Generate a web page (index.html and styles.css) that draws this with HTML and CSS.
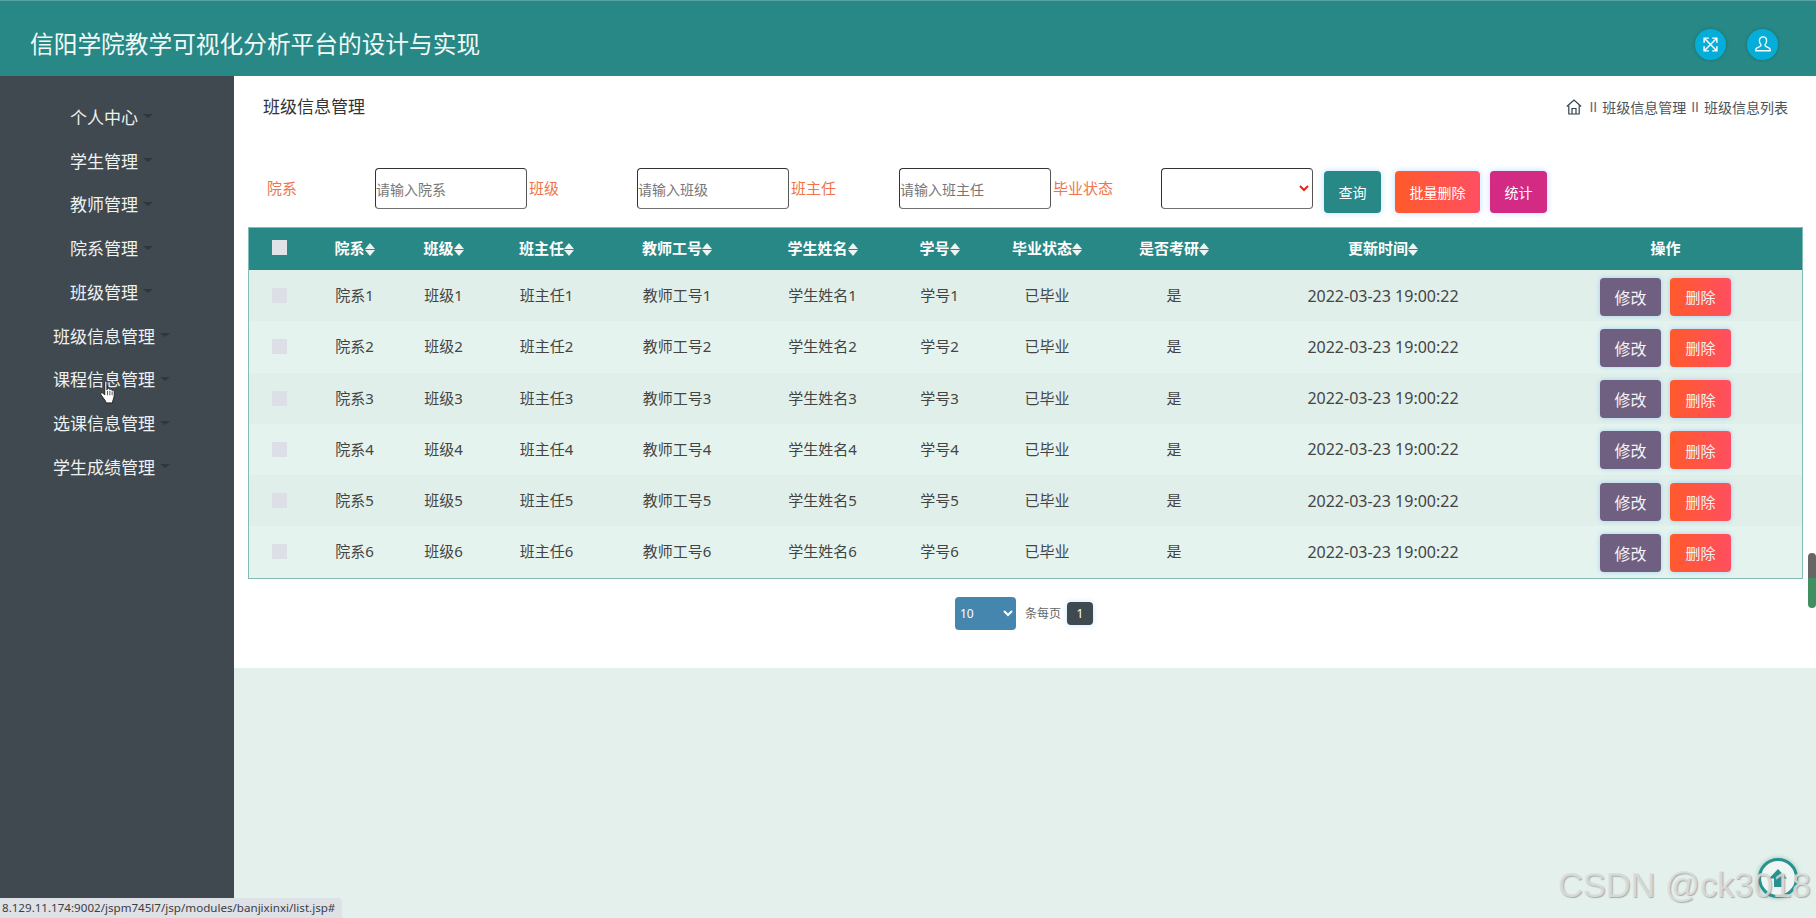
FILE: index.html
```html
<!DOCTYPE html>
<html lang="zh">
<head>
<meta charset="utf-8">
<title>班级信息管理</title>
<link rel="stylesheet" href="styles.css">
</head>
<body>
<div class="page">
  <header class="topbar">
    <h1 class="app-title">信阳学院教学可视化分析平台的设计与实现</h1>
    <div class="top-actions">
      <span class="round-btn">
        <svg viewBox="0 0 20 20" width="17" height="17" fill="none" stroke="#fff" stroke-width="1.6"><path d="M3 3 17 17M17 3 3 17"/><path d="M2.5 8V2.5H8M12 2.5h5.5V8M17.5 12v5.5H12M8 17.5H2.5V12" stroke-width="1.7"/></svg>
      </span>
      <span class="round-btn">
        <svg viewBox="0 0 20 20" width="18" height="18" fill="none" stroke="#fff" stroke-width="1.5"><path d="M10 2c-2.6 0-4 2-4 4.4 0 1.8.7 3.300 1.700 4.300.3.900-.2 1.600-1.200 2.100L3 14.500c-1 .6-1.200 1.500-1 3h16c.2-1.500 0-2.400-1-3l-3.500-1.700c-1-.5-1.500-1.200-1.200-2.100 1-1 1.700-2.500 1.700-4.300C14 4 12.600 2 10 2Z"/></svg>
      </span>
    </div>
  </header>

  <div class="layout">
    <nav class="sidebar">
      <a class="nav-item">个人中心<i class="caret"></i></a>
      <a class="nav-item">学生管理<i class="caret"></i></a>
      <a class="nav-item">教师管理<i class="caret"></i></a>
      <a class="nav-item">院系管理<i class="caret"></i></a>
      <a class="nav-item">班级管理<i class="caret"></i></a>
      <a class="nav-item">班级信息管理<i class="caret"></i></a>
      <a class="nav-item">课程信息管理<i class="caret"></i></a>
      <a class="nav-item">选课信息管理<i class="caret"></i></a>
      <a class="nav-item">学生成绩管理<i class="caret"></i></a>
    </nav>

    <main class="main">
      <section class="card">
        <div class="title-row">
          <h2 class="page-title">班级信息管理</h2>
          <div class="crumbs">
            <svg class="home" viewBox="0 0 16 16" width="16" height="16" fill="none" stroke="#33404a" stroke-width="1.2"><path d="M.8 7.500 8 1l7.200 6.500"/><path d="M2.800 6.500V15h10.400V6.500"/><path d="M6 15V9.500h4V15"/></svg>
            <span class="sep">II</span><span>班级信息管理</span><span class="sep">II</span><span>班级信息列表</span>
          </div>
        </div>

        <form class="search">
          <label class="field-label">院系</label>
          <input class="field-input" placeholder="请输入院系">
          <label class="field-label">班级</label>
          <input class="field-input" placeholder="请输入班级">
          <label class="field-label">班主任</label>
          <input class="field-input" placeholder="请输入班主任">
          <label class="field-label">毕业状态</label>
          <select class="field-select"><option></option></select>
          <div class="search-actions">
            <button type="button" class="btn btn-query">查询</button>
            <button type="button" class="btn btn-batch">批量删除</button>
            <button type="button" class="btn btn-stats">统计</button>
          </div>
        </form>

        <table class="grid">
          <colgroup>
            <col class="c-check"><col class="c-dept"><col class="c-class"><col class="c-head"><col class="c-tno"><col class="c-name"><col class="c-sno"><col class="c-state"><col class="c-exam"><col class="c-time"><col class="c-ops">
          </colgroup>
          <thead>
            <tr>
              <th><span class="check check-head"></span></th>
              <th>院系<i class="sort"></i></th>
              <th>班级<i class="sort"></i></th>
              <th>班主任<i class="sort"></i></th>
              <th>教师工号<i class="sort"></i></th>
              <th>学生姓名<i class="sort"></i></th>
              <th>学号<i class="sort"></i></th>
              <th>毕业状态<i class="sort"></i></th>
              <th>是否考研<i class="sort"></i></th>
              <th>更新时间<i class="sort"></i></th>
              <th>操作</th>
            </tr>
          </thead>
          <tbody>
            <tr><td><span class="check"></span></td><td>院系1</td><td>班级1</td><td>班主任1</td><td>教师工号1</td><td>学生姓名1</td><td>学号1</td><td>已毕业</td><td>是</td><td class="t-date">2022-03-23 19:00:22</td><td><div class="ops"><button type="button" class="btn-row btn-edit">修改</button><button type="button" class="btn-row btn-del">删除</button></div></td></tr>
            <tr><td><span class="check"></span></td><td>院系2</td><td>班级2</td><td>班主任2</td><td>教师工号2</td><td>学生姓名2</td><td>学号2</td><td>已毕业</td><td>是</td><td class="t-date">2022-03-23 19:00:22</td><td><div class="ops"><button type="button" class="btn-row btn-edit">修改</button><button type="button" class="btn-row btn-del">删除</button></div></td></tr>
            <tr><td><span class="check"></span></td><td>院系3</td><td>班级3</td><td>班主任3</td><td>教师工号3</td><td>学生姓名3</td><td>学号3</td><td>已毕业</td><td>是</td><td class="t-date">2022-03-23 19:00:22</td><td><div class="ops"><button type="button" class="btn-row btn-edit">修改</button><button type="button" class="btn-row btn-del">删除</button></div></td></tr>
            <tr><td><span class="check"></span></td><td>院系4</td><td>班级4</td><td>班主任4</td><td>教师工号4</td><td>学生姓名4</td><td>学号4</td><td>已毕业</td><td>是</td><td class="t-date">2022-03-23 19:00:22</td><td><div class="ops"><button type="button" class="btn-row btn-edit">修改</button><button type="button" class="btn-row btn-del">删除</button></div></td></tr>
            <tr><td><span class="check"></span></td><td>院系5</td><td>班级5</td><td>班主任5</td><td>教师工号5</td><td>学生姓名5</td><td>学号5</td><td>已毕业</td><td>是</td><td class="t-date">2022-03-23 19:00:22</td><td><div class="ops"><button type="button" class="btn-row btn-edit">修改</button><button type="button" class="btn-row btn-del">删除</button></div></td></tr>
            <tr><td><span class="check"></span></td><td>院系6</td><td>班级6</td><td>班主任6</td><td>教师工号6</td><td>学生姓名6</td><td>学号6</td><td>已毕业</td><td>是</td><td class="t-date">2022-03-23 19:00:22</td><td><div class="ops"><button type="button" class="btn-row btn-edit">修改</button><button type="button" class="btn-row btn-del">删除</button></div></td></tr>
          </tbody>
        </table>

        <div class="pager">
          <select class="pager-size"><option>10</option></select>
          <span class="pager-text">条每页</span>
          <span class="pager-num">1</span>
        </div>
      </section>
    </main>
  </div>

  <div class="scroll-thumb"><span class="scroll-top"></span><span class="scroll-bottom"></span></div>

  <div class="back-top">
    <svg viewBox="0 0 24 24" width="24" height="24" fill="#2a928d"><path d="M12 3 21 12.500H16V21H8V12.500H3Z"/></svg>
  </div>

  <div class="watermark">CSDN @ck3018</div>

  <div class="status-url">8.129.11.174:9002/jspm745l7/jsp/modules/banjixinxi/list.jsp#</div>

  <svg class="hand" viewBox="0 0 16 22" width="18" height="24"><path d="M5 1.500c.8-.8 2-.3 2 .8V9l.5-1.300c1.300-.4 2 .1 2.100 1 1-.5 1.900-.1 2 .8 1-.4 2 .1 2.100 1.100.2 3 0 5.500-1 7.500l-.7 2.900H6.200L5.500 19 1.500 13.500c-.8-1.200.5-2.500 1.700-1.500L5 13.500Z" fill="#fff" stroke="#222" stroke-width=".9"/><path d="M7.500 10v4M9.700 10v4M11.800 10.500v3.500" stroke="#222" stroke-width=".7"/></svg>
</div>
</body>
</html>
```
FILE: styles.css
```css
* { box-sizing: border-box; }
html, body { margin: 0; height: 100%; overflow: hidden; }
body {
  font-family: "Noto Sans", "Noto Sans CJK SC", sans-serif;
  background: #e4f0ec;
  color: #444;
}
.page { position: relative; height: 918px; display: flex; flex-direction: column; }

.topbar {
  flex: 0 0 76px;
  display: flex;
  align-items: center;
  justify-content: space-between;
  padding: 0 38px 0 30px;
  background: #278886;
  border-top: 1px solid #56a5a2;
}
.app-title { margin: 11px 0 0; font-size: 23.7px; font-weight: 400; color: #f2faf8; line-height: 32px; }
.top-actions { display: flex; gap: 21px; margin-top: 11px; }
.round-btn {
  width: 31px; height: 31px; border-radius: 50%;
  background: #05aed9;
  display: flex; align-items: center; justify-content: center;
  box-shadow: 0 0 3px rgba(0, 60, 70, .35);
}

.layout { flex: 1; display: flex; min-height: 0; }
.sidebar {
  flex: 0 0 234px;
  background: #40494f;
  padding: 18.5px 11px 0 0;
}
.nav-item {
  display: flex; align-items: center; justify-content: center;
  height: 43.75px;
  font-size: 17px;
  color: #eef1f1;
}
.caret {
  width: 0; height: 0; margin: 0 0 0 5px;
  border-left: 5px solid transparent;
  border-right: 5px solid transparent;
  border-top: 4px solid #2f373c;
}

.main { flex: 1; min-width: 0; }
.card { height: 592px; background: #fff; padding: 20px 13px 0 14px; }

.title-row { display: flex; justify-content: space-between; align-items: center; height: 22px; }
.page-title { margin: 0 0 0 15px; font-size: 17px; font-weight: 400; color: #333; line-height: 22px; }
.crumbs { display: flex; align-items: center; font-size: 14px; color: #4b545a; margin-right: 15px; }
.home { margin-right: 2px; }
.sep { margin: 0 5px; color: #5f6873; font: 14px "Liberation Sans", sans-serif; }

.search { display: flex; align-items: flex-start; margin-top: 50px; padding-left: 19px; height: 45px; }
.field-label { flex: 0 0 108px; font-size: 15px; line-height: 40px; color: #f0734c; }
.field-input, .field-select {
  flex: 0 0 152px; width: 152px; min-width: 0; height: 41px; margin-right: 2px;
  border: 1px solid #333; border-bottom-color: #6f6f6f; border-right-color: #555;
  border-radius: 4px; background: #fff; padding: 1px 0 0; outline: none;
  font: 14px "Noto Sans", "Noto Sans CJK SC", sans-serif;
}
.field-input::placeholder { color: #777; }
.field-select { color: #e0261b; margin-right: 0; }
.search-actions { display: flex; margin: 3px 0 0 11px; }
.btn {
  height: 42px; border: 0; border-radius: 4px; color: #fff;
  font: 14px "Noto Sans", "Noto Sans CJK SC", sans-serif;
  box-shadow: 0 0 6px rgba(64, 158, 255, .35);
}
.btn-query { width: 57px; background: #278886; margin-right: 14px; }
.btn-batch { width: 85px; background: linear-gradient(90deg, #ff5a2a, #ff4f62); margin-right: 10px; }
.btn-stats { width: 57px; background: #d32a84; }

.grid {
  width: 100%; table-layout: fixed; border-collapse: separate; border-spacing: 0;
  margin-top: 14px;
  border: 1px solid #84bcb8;
  font-size: 15px;
  color: #444;
}
.c-check { width: 61px; } .c-dept { width: 89px; } .c-class { width: 89px; }
.c-head { width: 117px; } .c-tno { width: 144px; } .c-name { width: 147px; }
.c-sno { width: 87px; } .c-state { width: 128px; } .c-exam { width: 126px; }
.c-time { width: 292px; } .c-ops { width: 273px; }

.grid th {
  height: 42px; padding: 0 0 3px; background: #278886; color: #fff;
  font-size: 15px; font-weight: 700; text-align: center;
}
.grid td { height: 51.25px; padding: 0 0 2px; text-align: center; background: #e1efea; }
.grid tbody tr:nth-child(even) td { background: #e5f3ee; }
.grid .t-date { font-size: 16px; padding: 0; }

.sort { display: inline-block; width: 10px; height: 13px; position: relative; vertical-align: -2px; }
.sort::before, .sort::after {
  content: ""; position: absolute; left: 0;
  border-left: 5px solid transparent; border-right: 5px solid transparent;
}
.sort::before { top: 0; border-bottom: 6px solid #eaf5f3; }
.sort::after { bottom: 0; border-top: 6px solid #eaf5f3; }

.check { display: block; width: 15px; height: 15px; margin: 0 auto; background: #dcdfe6; }
.grid td .check { margin-top: 2px; }
.check-head { background: #e0e4e8; }

.ops { display: flex; justify-content: center; gap: 9px; margin-top: 4px; }
.btn-row {
  width: 61px; height: 38px; border: 0; border-radius: 4px; color: #f4f2f6;
  font: 16px "Noto Sans", "Noto Sans CJK SC", sans-serif;
  box-shadow: 0 0 5px rgba(64, 158, 255, .4);
}
.btn-edit { background: #6f5f80; }
.btn-del { background: linear-gradient(90deg, #ff5a2c, #ff4f60); font-size: 15px; }

.pager { display: flex; align-items: center; justify-content: center; margin-top: 18px; height: 33px; padding-right: 3px; }
.pager-size {
  width: 61px; height: 33px; border: 0; border-radius: 4px;
  background: #4586ae; color: #fff; padding-left: 1px;
  font: 12px "Noto Sans", sans-serif;
}
.pager-text { margin: 0 6px 0 9px; font-size: 12px; color: #666; }
.pager-num {
  width: 26px; height: 23px; border-radius: 4px;
  background: #3f4a50; color: #fff; font-size: 12px;
  display: flex; align-items: center; justify-content: center;
  box-shadow: 0 0 5px rgba(64, 158, 255, .3);
}

.scroll-thumb {
  position: absolute; left: 1808px; top: 553px; width: 8px; height: 55px;
  border-radius: 4px; overflow: hidden; display: flex; flex-direction: column;
}
.scroll-top { flex: 0 0 25px; background: #666; }
.scroll-bottom { flex: 1; background: #3f8f60; }

.back-top {
  position: absolute; left: 1758px; top: 858px; width: 40px; height: 40px;
  border-radius: 50%; border: 3px solid #2a928d; background: #eef6f4;
  display: flex; align-items: center; justify-content: center;
  box-shadow: 0 0 4px rgba(42, 146, 141, .5);
}
.watermark {
  position: absolute; left: 1558px; top: 865px;
  font: 34.4px/40px "Liberation Sans", sans-serif;
  color: rgba(222, 222, 222, .85);
  text-shadow: 1px 1px 1px rgba(120, 120, 120, .55);
  white-space: nowrap;
}
.status-url {
  position: absolute; left: 0; bottom: 0; height: 20px; width: 342px;
  padding-left: 2px; background: #dee1e6; color: #3c4043;
  border-top-right-radius: 4px;
  font: 11.6px/20px "Noto Sans", sans-serif;
  white-space: nowrap; overflow: hidden;
}
.hand { position: absolute; left: 99px; top: 380px; }
```
